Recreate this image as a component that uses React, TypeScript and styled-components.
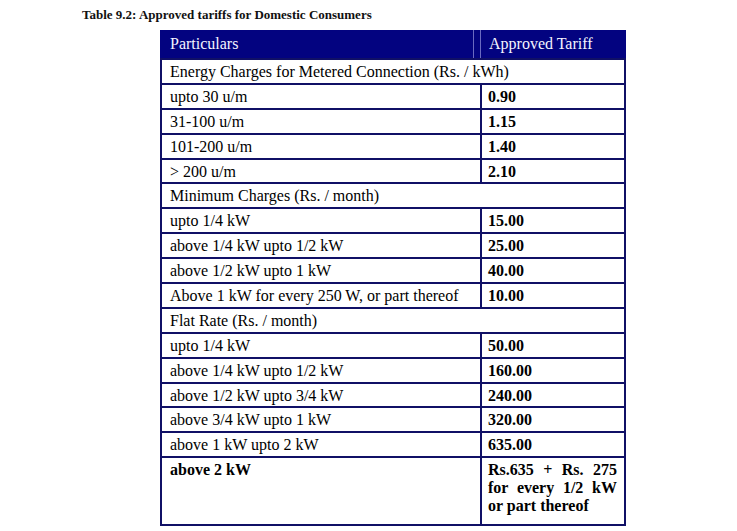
import React from "react";
import styled, { createGlobalStyle } from "styled-components";

const Global = createGlobalStyle`
  html, body { margin: 0; padding: 0; background: #ffffff; }
  body { font-family: "Liberation Serif", "Times New Roman", serif; color: #000; }
`;

const Page = styled.div`
  width: 737px;
  height: 531px;
  box-sizing: border-box;
  padding: 7px 0 0 82px;
  display: flex;
  flex-direction: column;
`;

const Caption = styled.div`
  font-weight: bold;
  font-size: 13px;
  line-height: 16px;
  height: 23px;
  color: #111;
`;

const Table = styled.div`
  margin-left: 78px;
  width: 466px;
  box-sizing: border-box;
  border: 2px solid #101066;
  border-top: none;
  display: flex;
  flex-direction: column;
`;

const HeaderRow = styled.div`
  display: grid;
  grid-template-columns: 312px 144px;
  column-gap: 6px;
  background: #030380;
  height: 28px;
  margin: 0 -2px;
  padding: 0 2px;
`;

const HeaderCell = styled.div<{ $divider?: "right" | "left" }>`
  color: #f4f4ff;
  font-size: 16px;
  line-height: 28px;
  padding-left: ${(p) => (p.$divider === "left" ? "8px" : "8px")};
  ${(p) => (p.$divider === "right" ? "border-right: 1px solid #6a6ac0;" : "")}
  ${(p) => (p.$divider === "left" ? "border-left: 1px solid #6a6ac0;" : "")}
`;

const Row = styled.div<{ $tall?: boolean }>`
  display: grid;
  grid-template-columns: 318px 144px;
  border-top: 2px solid #101066;
  height: ${(p) => (p.$tall ? "66px" : "22.9px")};
`;

const SectionRow = styled.div`
  border-top: 2px solid #101066;
  height: 22.9px;
  font-size: 16px;
  line-height: 23px;
  padding-left: 8px;
  white-space: nowrap;
`;

const LabelCell = styled.div<{ $bold?: boolean; $top?: boolean }>`
  font-size: 16px;
  line-height: ${(p) => (p.$top ? "18px" : "23px")};
  padding: ${(p) => (p.$top ? "3px 0 0 8px" : "0 0 0 8px")};
  font-weight: ${(p) => (p.$bold ? "bold" : "normal")};
  white-space: nowrap;
`;

const ValueCell = styled.div<{ $top?: boolean }>`
  border-left: 2px solid #101066;
  font-size: 16px;
  font-weight: bold;
  line-height: ${(p) => (p.$top ? "18px" : "23px")};
  padding: ${(p) => (p.$top ? "3px 7px 0 6px" : "0 0 0 6px")};
  text-align: ${(p) => (p.$top ? "justify" : "left")};
`;

type Item =
  | { kind: "section"; text: string }
  | { kind: "row"; label: string; value: string };

const items: Item[] = [
  { kind: "section", text: "Energy Charges for Metered Connection (Rs. / kWh)" },
  { kind: "row", label: "upto 30 u/m", value: "0.90" },
  { kind: "row", label: "31-100 u/m", value: "1.15" },
  { kind: "row", label: "101-200 u/m", value: "1.40" },
  { kind: "row", label: "> 200 u/m", value: "2.10" },
  { kind: "section", text: "Minimum Charges (Rs. / month)" },
  { kind: "row", label: "upto 1/4 kW", value: "15.00" },
  { kind: "row", label: "above 1/4 kW upto 1/2 kW", value: "25.00" },
  { kind: "row", label: "above 1/2 kW upto 1 kW", value: "40.00" },
  { kind: "row", label: "Above 1 kW for every 250 W, or part thereof", value: "10.00" },
  { kind: "section", text: "Flat Rate (Rs. / month)" },
  { kind: "row", label: "upto 1/4 kW", value: "50.00" },
  { kind: "row", label: "above 1/4 kW upto 1/2 kW", value: "160.00" },
  { kind: "row", label: "above 1/2 kW upto 3/4 kW", value: "240.00" },
  { kind: "row", label: "above 3/4 kW upto 1 kW", value: "320.00" },
  { kind: "row", label: "above 1 kW upto 2 kW", value: "635.00" },
];

export default function App() {
  return (
    <>
      <Global />
      <Page>
        <Caption>Table 9.2: Approved tariffs for Domestic Consumers</Caption>
        <Table>
          <HeaderRow>
            <HeaderCell $divider="right">Particulars</HeaderCell>
            <HeaderCell $divider="left">Approved Tariff</HeaderCell>
          </HeaderRow>
          {items.map((it, i) =>
            it.kind === "section" ? (
              <SectionRow key={i}>{it.text}</SectionRow>
            ) : (
              <Row key={i}>
                <LabelCell>{it.label}</LabelCell>
                <ValueCell>{it.value}</ValueCell>
              </Row>
            )
          )}
          <Row $tall>
            <LabelCell $bold $top>above 2 kW</LabelCell>
            <ValueCell $top>Rs.635 + Rs. 275 for every 1/2 kW or part thereof</ValueCell>
          </Row>
        </Table>
      </Page>
    </>
  );
}
